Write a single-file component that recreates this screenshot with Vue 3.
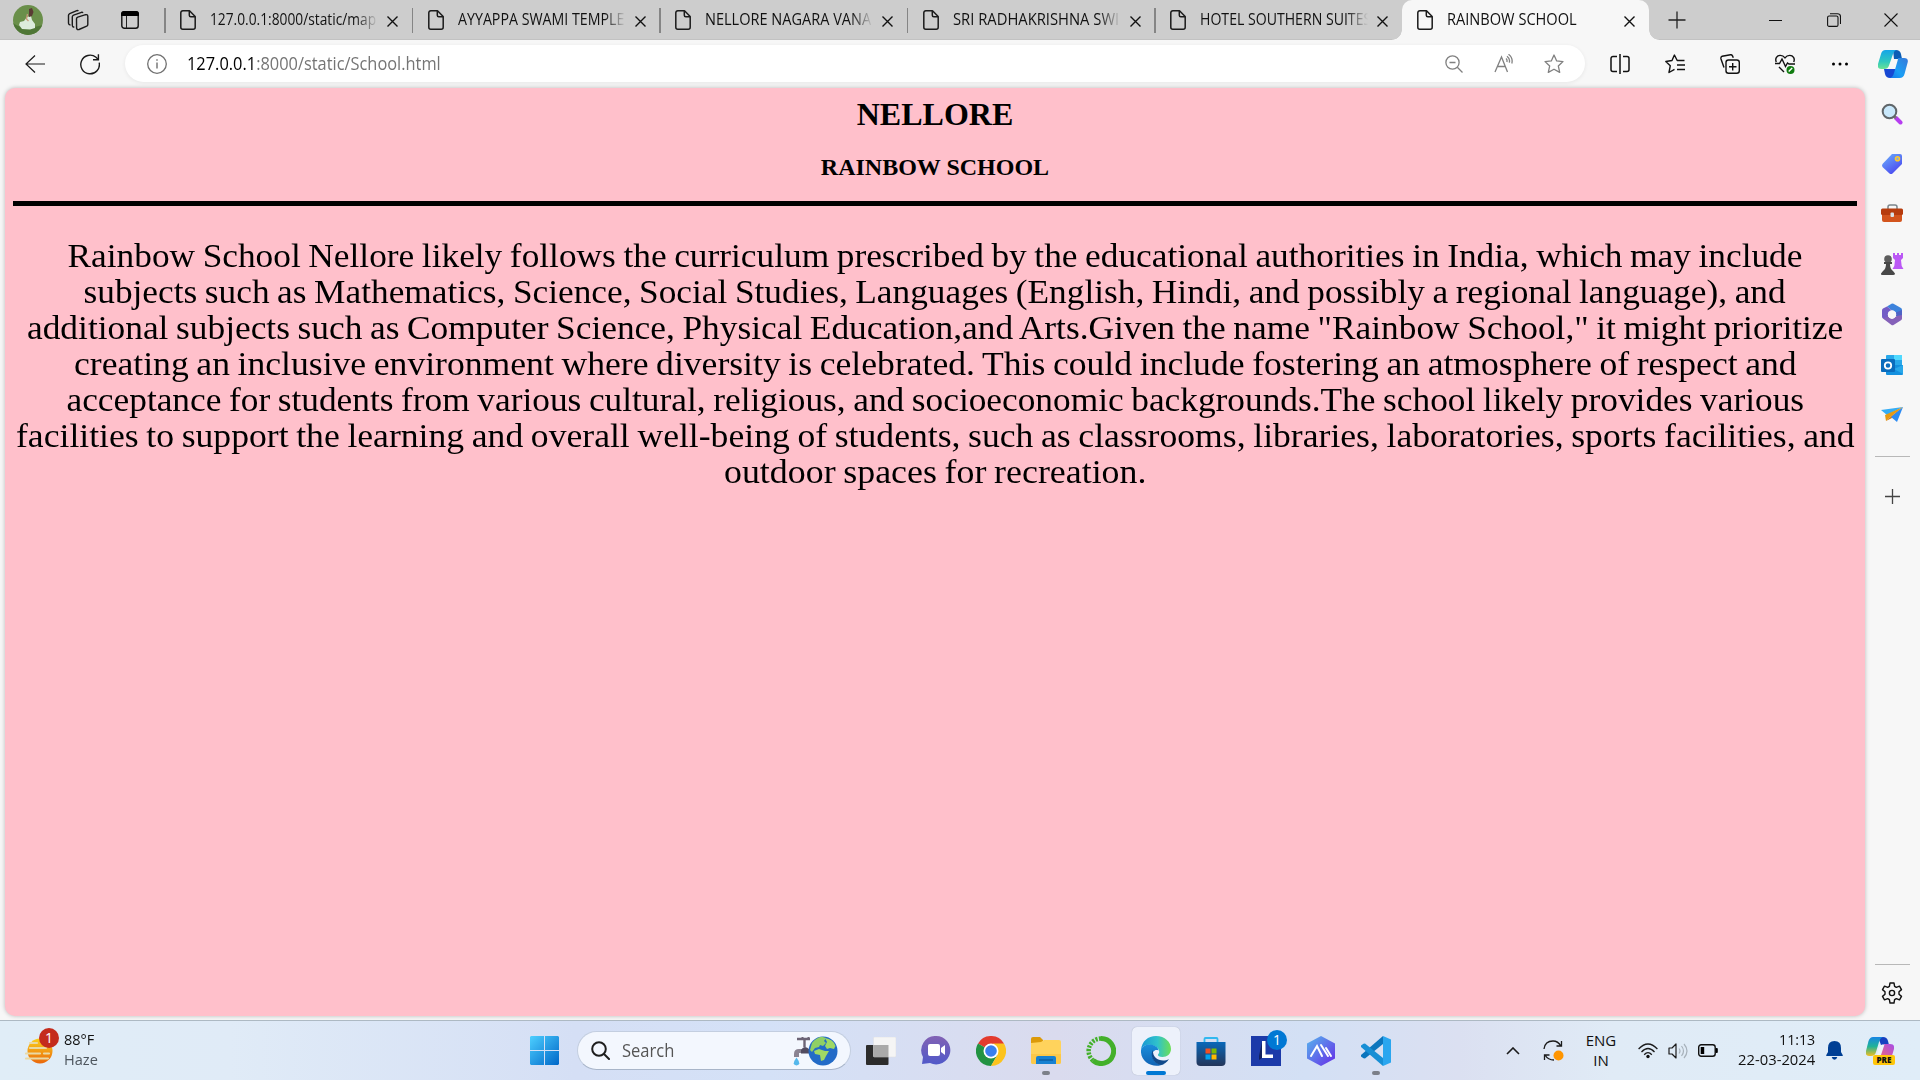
<script setup>
// Stretches a text run horizontally to the given advance width.
const vFit = {
  mounted(el, { value }) {
    el.style.transform = `scaleX(${value / el.offsetWidth})`
  }
}

const tabs = [
  { title: '127.0.0.1:8000/static/map', width: 166 },
  { title: 'AYYAPPA SWAMI TEMPLE', width: 166 },
  { title: 'NELLORE NAGARA VANA', width: 166 },
  { title: 'SRI RADHAKRISHNA SWI', width: 166 },
  { title: 'HOTEL SOUTHERN SUITES', width: 171 },
  { title: 'RAINBOW SCHOOL', width: 130, active: true }
]

const lines = [
  { text: 'Rainbow School Nellore likely follows the curriculum prescribed by the educational authorities in India, which may include', width: 1735 },
  { text: 'subjects such as Mathematics, Science, Social Studies, Languages (English, Hindi, and possibly a regional language), and', width: 1702 },
  { text: 'additional subjects such as Computer Science, Physical Education,and Arts.Given the name "Rainbow School," it might prioritize', width: 1816 },
  { text: 'creating an inclusive environment where diversity is celebrated. This could include fostering an atmosphere of respect and', width: 1723 },
  { text: 'acceptance for students from various cultural, religious, and socioeconomic backgrounds.The school likely provides various', width: 1738 },
  { text: 'facilities to support the learning and overall well-being of students, such as classrooms, libraries, laboratories, sports facilities, and', width: 1839 },
  { text: 'outdoor spaces for recreation.', width: 422 }
]
</script>

<template>
  <div class="screen">
    <header class="tabstrip">
      <div class="slot profile">
        <svg width="30" height="30" viewBox="0 0 30 30">
          <defs><clipPath id="av"><circle cx="15" cy="15" r="15" /></clipPath></defs>
          <g clip-path="url(#av)">
            <rect width="30" height="30" fill="#6a8f4a" />
            <path d="M0 18Q10 26 30 20V30H0z" fill="#4f7636" />
            <path d="M14 12l4-1 1 4 3 4 0 4-5 1.500-8-.5-3-4 1-3 4-1z" fill="#dcecdc" />
            <path d="M16 4l3-1 1.500 4-1.500 4-3 1z" fill="#5a3b34" />
            <path d="M14.500 9l-1 5 2 2" stroke="#c99a7d" stroke-width="1.300" fill="none" />
          </g>
        </svg>
      </div>
      <div class="slot workspaces">
        <svg width="22" height="22" viewBox="0 0 22 22" fill="none" stroke="#1b1b1b" stroke-width="1.400" stroke-linejoin="round">
          <path d="M9.500 9.700q.1-1.200 1.300-1.600l7.800-2.400q2-.4 2.200 1.500v8.300q0 1.200-1.100 1.700l-7.700 3.300q-1.900.6-2.400-1.200z" />
          <path d="M7.300 18q-1.900.2-2-1.700V7.800q.1-1.200 1.300-1.700L14.500 3.300q1-.2 1.400.8" />
          <path d="M3.500 16q-1.900-.1-2-1.800V6.400q.1-1.200 1.200-1.700L9.800 1.600q1-.3 1.500.5" />
        </svg>
      </div>
      <div class="slot tabactions">
        <svg width="18" height="18" viewBox="0 0 18 18"><rect x=".8" y=".8" width="16.400" height="16.400" rx="2.500" fill="none" stroke="#111" stroke-width="1.400" /><path d="M0 3a3 3 0 0 1 3-3h12a3 3 0 0 1 3 3v2H0z" fill="#000" /><path d="M5.500 5v12" stroke="#222" /></svg>
      </div>
      <div v-for="t in tabs" :key="t.title" class="tab" :class="{ active: t.active }">
        <svg class="page" width="16" height="20" viewBox="0 0 16 20" fill="none" stroke="#1b1b1b" stroke-width="1.500" stroke-linejoin="round"><path d="M2.800.8H9.500L15.200 6.500V17.200a2 2 0 0 1-2 2H2.800a2 2 0 0 1-2-2V2.800a2 2 0 0 1 2-2z" /><path d="M9.300 1v4.200q0 1.500 1.500 1.500H15" /></svg>
        <div class="title"><span v-fit="t.width" class="run">{{ t.title }}</span></div>
        <svg class="x" width="11" height="11" viewBox="0 0 11 11" stroke="#111" stroke-width="1.400"><path d="M.5.5l10 10M10.500.5l-10 10" /></svg>
      </div>
      <svg class="newtab" width="18" height="18" viewBox="0 0 18 18" stroke="#222" stroke-width="1.300"><path d="M9 .5v17M.5 9h17" /></svg>
      <div class="window">
        <svg width="14" height="14" viewBox="0 0 14 14" fill="none" stroke="#111"><path d="M0 7.500h13" /></svg>
        <svg width="14" height="14" viewBox="0 0 14 14" fill="none" stroke="#111" stroke-width="1.100"><rect x=".6" y="3" width="10.400" height="10.400" rx="1.500" /><path d="M3 .7h7.500a3 3 0 0 1 3 3V11" /></svg>
        <svg width="14" height="14" viewBox="0 0 14 14" fill="none" stroke="#111" stroke-width="1.100"><path d="M.5.5l13 13M13.500.5l-13 13" /></svg>
      </div>
    </header>

    <div class="body">
      <div class="left">
        <nav class="toolbar">
          <svg class="back" width="20" height="18" viewBox="0 0 20 18" fill="none" stroke="#1b1b1b" stroke-width="1.200"><path d="M20 9H1M10 .5L1 9l9 8.500" /></svg>
          <svg class="reload" width="20" height="21" viewBox="0 0 20 21" fill="none" stroke="#1b1b1b" stroke-width="1.400"><path d="M19.200 8.600A9.300 9.300 0 1 1 16 3.300L18.300 5.500" /><path d="M18.400.3v5.400H13" /></svg>
          <div class="address">
            <svg class="info" width="20" height="20" viewBox="0 0 20 20" fill="none" stroke="#707070" stroke-width="1.300"><circle cx="10" cy="10" r="9.300" /><path d="M10 8.500v6M10 5.300v1.500" stroke-width="1.400" /></svg>
            <div class="url"><span v-fit="254" class="run">127.0.0.1<i>:8000/static/School.html</i></span></div>
            <svg width="20" height="20" viewBox="0 0 20 20" fill="none" stroke="#808080" stroke-width="1.300"><circle cx="8.500" cy="8.500" r="6.600" /><path d="M13.300 13.300l5.200 5.200M5.500 8.500h6" /></svg>
            <svg width="20" height="20" viewBox="0 0 20 20" fill="none" stroke="#808080" stroke-width="1.300"><path d="M1 18L7.500 3 13.500 18M3.200 12.500h8.300M12 4.500q1.600 1.500.8 3.500M13 2.200q3.400 2.500 2.300 6.500M14.500.3q4.800 3.700 3.300 9.200" /></svg>
            <svg width="20" height="20" viewBox="0 0 20 20" fill="none" stroke="#808080" stroke-width="1.300" stroke-linejoin="round"><path d="M10 1l2.700 5.900 6.300.7-4.700 4.300 1.400 6.500L10 15.200l-5.700 3.200 1.400-6.500L1 7.600l6.300-.7z" /></svg>
          </div>
          <div class="tools">
            <svg width="20" height="20" viewBox="0 0 20 20" fill="none" stroke="#111" stroke-width="1.500"><path d="M7 2.500H3a2 2 0 0 0-2 2v11a2 2 0 0 0 2 2h4M13 2.500h4a2 2 0 0 1 2 2v11a2 2 0 0 1-2 2h-4M10 0v20" /></svg>
            <svg width="20" height="20" viewBox="0 0 20 20" fill="none" stroke="#111" stroke-width="1.400" stroke-linejoin="round"><path d="M19.500 6.500h-7.300L9.400 1 7 6.500.8 7.500l4.500 4.200L4 18.500l5.500-3.200M12 11h8M12 15.500h8" /></svg>
            <svg width="20" height="20" viewBox="0 0 20 20" fill="none" stroke="#111" stroke-width="1.400"><rect x="6" y="6" width="13.300" height="13.300" rx="2.500" /><path d="M12.700 9v7.500M9 12.700h7.500M4 13.500L1 5q-.5-2 1.200-2.800L10.500.7q1.500-.2 2 1.200l.8 1.800" /></svg>
            <svg width="20" height="20" viewBox="0 0 20 20" fill="none" stroke="#111" stroke-width="1.400"><path d="M1.300 8C-.3 4.500 2 1.400 5.200 1.400q3 0 4.800 2.500 1.800-2.500 4.800-2.500c3.200 0 5.500 3.100 3.900 6.600M0 9.500h4.500l2.500-4.500 3.500 7.500 2-3.500 1.500 1h6M4 13l5 5" /><circle cx="15.500" cy="16" r="4" fill="#107c10" stroke="none" /><path d="M13.700 17.500l3.500-3.500" stroke="#fff" /></svg>
            <svg width="20" height="20" viewBox="0 0 20 20"><circle cx="3.500" cy="10" r="1.500" /><circle cx="10" cy="10" r="1.500" /><circle cx="16.500" cy="10" r="1.500" /></svg>
          </div>
        </nav>
        <main class="page-view">
          <h1>NELLORE</h1>
          <h2>RAINBOW SCHOOL</h2>
          <hr />
          <p><span v-for="l in lines" :key="l.text" class="line"><span v-fit="l.width" class="run">{{ l.text }}</span></span></p>
        </main>
      </div>

      <aside class="sidebar">
        <svg class="copilot" width="30" height="28" viewBox="0 0 30 28">
          <defs>
            <linearGradient id="c1" x1="0" y1="0" x2="0" y2="1"><stop offset="0" stop-color="#15a5e8" /><stop offset=".6" stop-color="#2ec7c0" /><stop offset="1" stop-color="#67e394" /></linearGradient>
            <linearGradient id="c2" x1="0" y1="1" x2="1" y2="0"><stop offset="0" stop-color="#1575e8" /><stop offset=".4" stop-color="#1b9ff5" /><stop offset="1" stop-color="#3778d8" /></linearGradient>
          </defs>
          <path d="M15 0h3q4 0 5 4l1 5h-8z" fill="#0b5db5" />
          <path d="M6 19l1 5q1 4 5 4h5l3-9z" fill="#1748d3" />
          <path d="M7.500 0H18q-2 1-3 4l-4 11.500q-1 3.500-5 3.500H3q-4 0-3-5L3 4q1-4 4.500-4z" fill="url(#c1)" />
          <path d="M20 8h6q5 0 3.500 5L26.500 24q-1 4-5 4H12q3-1 4-5l3.500-12q.5-2 .5-3z" fill="url(#c2)" />
          <path d="M16.500 9h3l-3 8q-1 2-4 2h-2l1-3 2-5q1-2 3-2z" fill="#f7f7f7" />
        </svg>
        <div class="apps">
          <div class="side-slot"><svg width="22" height="22" viewBox="0 0 22 22"><path d="M15 15l4.500 4.500" stroke="#b63df0" stroke-width="4" stroke-linecap="round" /><path d="M12 12l3 3" stroke="#777" stroke-width="2.500" /><circle cx="8.500" cy="8.500" r="6.800" fill="#c9e8fb" stroke="#60666a" stroke-width="2" /></svg></div>
          <div class="side-slot"><svg width="22" height="22" viewBox="0 0 22 22"><defs><linearGradient id="tg" x1="0" y1="0" x2=".7" y2="1"><stop stop-color="#6cb4fb" /><stop offset="1" stop-color="#4a46f0" /></linearGradient></defs><path d="M11 1h8q2 0 2 2v8l-9.500 9.500q-1.500 1-3 0L1.500 14q-1-1.500 0-3z" fill="url(#tg)" /><circle cx="16.500" cy="5.700" r="2" fill="#80a5e9" stroke="#ffc928" stroke-width="1.600" /></svg></div>
          <div class="side-slot"><svg width="22" height="22" viewBox="0 0 22 22"><path d="M7 6V4q0-2 2-2h5q2 0 2 2v2" fill="none" stroke="#7b858b" stroke-width="1.500" /><path d="M1 11h20v6q0 2-2 2H3q-2 0-2-2z" fill="#d3541d" /><rect y="5.500" width="22" height="6.500" rx="1.500" fill="#b63c0e" /><rect x="9.500" y="9.500" width="3.500" height="4.500" rx="1" fill="#d9e3e8" /></svg></div>
          <div class="side-slot"><svg width="24" height="24" viewBox="0 0 24 24"><path d="M13 1h2v2h2V1h2v2h2V1h2v5l-2 2 .7 6 1.800 3H12.500l1.800-3 .7-6-2-2z" fill="#bb58f5" /><circle cx="8" cy="7" r="3.800" fill="#5c5c5c" /><path d="M4 10h8v2h-2q0 5 3 7l2 2.500q0 1.500-2 1.500H2.500q-2 0-1.500-1.500L3 19q3-2 3-7H4z" fill="#484848" /></svg></div>
          <div class="side-slot"><svg width="22" height="23" viewBox="0 0 22 23"><path d="M6 3.500L10.500.8q1-.5 2 0L20 5q1 .7 1 2v8l-6-2V9.500L11 7.500z" fill="#3d83dc" /><path d="M6 3.500L11 7.500 7 10v4l3 5-8-3.500q-1-.7-1-2V7.500q0-1.300 1-2z" fill="#735cc6" /><path d="M2 15.500l5-2 4 2.500 4-2.500 6-5V15.500q0 1.200-1 1.800l-7.500 4.700q-1 .6-2 0z" fill="#8561b9" /><path d="M15 13V9.500L21 7v5z" fill="#4e63c5" /><circle cx="11" cy="11.500" r="4.200" fill="#f7f7f7" /></svg></div>
          <div class="side-slot"><svg width="22" height="22" viewBox="0 0 22 22"><path d="M6 1h14q1 0 1 1v9H5V2q0-1 1-1z" fill="#28a8ea" /><path d="M13 1h8v5h-8z" fill="#50d9ff" /><path d="M5 11h17v9q0 1-1 1H6q-1 0-1-1z" fill="#1490df" /><path d="M22 11v9L13 15z" fill="#28a8ea" /><rect y="5" width="14" height="13" rx="1" fill="#0a6cbd" /><circle cx="7" cy="11.500" r="3.200" fill="none" stroke="#fff" stroke-width="1.800" /></svg></div>
          <div class="side-slot"><svg width="22" height="22" viewBox="0 0 22 22"><path d="M0 6l22-3L6 11z" fill="#35adf5" /><path d="M22 3L4 11l1 6 3-3z" fill="#e89b10" /><path d="M22 3L8 14l-3 3 6-3z" fill="#d67c16" /><path d="M22 3L10 13l6 5z" fill="#2c8bf3" /></svg></div>
        </div>
        <div class="rule"></div>
        <svg class="plus" width="15" height="15" viewBox="0 0 15 15" stroke="#444" stroke-width="1.300"><path d="M7.500 0v15M0 7.500h15" /></svg>
        <div class="rule bottom"></div>
        <svg class="gear" width="22" height="22" viewBox="0 0 22 22" fill="none" stroke="#111" stroke-width="1.400" stroke-linejoin="round"><path d="M9 1h4l.6 3.300 1.700 1 3.200-1.200 2 3.500L18 9.800v2.400l2.500 2.200-2 3.500-3.200-1.200-1.700 1L13 21H9l-.6-3.300-1.700-1-3.200 1.200-2-3.500L4 12.200V9.800L1.500 7.600l2-3.500 3.200 1.200 1.700-1z" /><circle cx="11" cy="11" r="2.600" /></svg>
      </aside>
    </div>

    <footer class="taskbar">
      <div class="weather">
        <div class="sun">
          <svg width="28" height="26" viewBox="0 0 28 26"><defs><linearGradient id="sn" x1="0" y1="0" x2="0" y2="1"><stop stop-color="#fbd01c" /><stop offset="1" stop-color="#ea670c" /></linearGradient></defs><circle cx="15" cy="13" r="12.500" fill="url(#sn)" /><path d="M5 5h7M5 10h16M1 15.500h14M19 15.500h5M1 20.500h22" stroke="#e9d9a4" stroke-width="2.200" stroke-linecap="round" /></svg>
          <b class="badge">1</b>
        </div>
        <div class="stack"><span v-fit="30" class="run">88°F</span><span v-fit="34" class="run dim">Haze</span></div>
      </div>

      <div class="apps-row">
        <svg class="start" width="29" height="29" viewBox="0 0 29 29"><defs><linearGradient id="w" x1="0" y1="0" x2="1" y2="1"><stop stop-color="#4dcfff" /><stop offset="1" stop-color="#0067c8" /></linearGradient></defs><path d="M1 0h13v14H0V1zM15 0h13l1 1v13H15zM0 15h14v14H1l-1-1zM15 15h14v13l-1 1H15z" fill="url(#w)" /></svg>
        <div class="search">
          <svg width="19" height="19" viewBox="0 0 19 19" fill="none" stroke="#1e1e1e" stroke-width="2"><circle cx="8" cy="8" r="6.800" /><path d="M13 13l5 5" stroke-linecap="round" /></svg>
          <span v-fit="52" class="run">Search</span>
          <svg class="earth" width="46" height="30" viewBox="0 0 46 30"><path d="M2 21v-3q0-5 5-5h13v4H7v4z" fill="#8a8392" /><path d="M9 14q2-3 4-3t5 3v3.500H9z" fill="#514b60" /><path d="M10.500 1v3M16.500 1v3" stroke="#6c6476" stroke-width="2" /><path d="M5 3h13M12.500 3v8" stroke="#6c6476" stroke-width="2.400" /><path d="M4.500 21.500q5.500 7.500 0 8-5.500-.5 0-8z" fill="#55b8ec" /><circle cx="31" cy="15" r="14.500" fill="#236bc7" /><path d="M20 7q5-6 10-6.200l4 1.200-2 3 2 2-3 3-3-1-1 2-4 1-3 4-2-2z" fill="#8fcf65" /><path d="M33 2q8 1 10.500 8l-1.500 3-4-1-3 1-2-3 2-4zM22 15l5-2 6 2 4 0-3 5-2 4-3 1-1-6-5-1z" fill="#a0d964" /></svg>
        </div>
        <div class="app"><svg width="30" height="28" viewBox="0 0 30 28"><rect y="8" width="22.500" height="20" rx="1" fill="#2c2c2c" /><rect x="7.500" width="22.500" height="20" rx="1" fill="#f5f5f5" stroke="#dedede" stroke-width=".5" /><path d="M7.500 8h15v12h-15z" fill="#aaa" /></svg></div>
        <div class="app"><svg width="30" height="29" viewBox="0 0 30 29"><defs><linearGradient id="tm" x1="0" y1="0" x2="0" y2="1"><stop stop-color="#8262b4" /><stop offset="1" stop-color="#5059c9" /></linearGradient></defs><path d="M15 0a14.200 14.200 0 1 1-6 27L1 28l1-7A14.200 14.200 0 0 1 15 0z" fill="url(#tm)" /><rect x="7" y="8" width="12" height="12" rx="2" fill="#fff" /><path d="M20 12l4-3v10l-4-3z" fill="#fff" /></svg></div>
        <div class="app"><svg width="30" height="30" viewBox="0 0 30 30"><path d="M15 15L2 7.500A15 15 0 0 1 28 7.500z" fill="#e33b2e" /><path d="M2 7.500A15 15 0 0 0 15 30l6.500-11.300L15 15z" fill="#229342" /><path d="M28 7.500A15 15 0 0 1 15 30l6.500-11.300L17 7.500z" fill="#fcc31d" /><circle cx="15" cy="15" r="7.500" fill="#fff" /><circle cx="15" cy="15" r="5.800" fill="#397fed" /></svg></div>
        <div class="app run-dot"><svg width="30" height="27" viewBox="0 0 30 27"><path d="M0 2q0-2 2-2h7l3 3v4H0z" fill="#dc9a09" /><path d="M0 6l10-1 3-2h15q2 0 2 2v20q0 2-2 2H2q-2 0-2-2z" fill="#ffd35c" /><path d="M0 17h30v8q0 2-2 2H2q-2 0-2-2z" fill="#fcc849" /><path d="M5 21q0-2 2-2h16q2 0 2 2v6H5z" fill="#1781d1" /><path d="M8 23h14" stroke="#0b5a9b" stroke-width="1.300" /></svg></div>
        <div class="app"><svg width="30" height="30" viewBox="0 0 30 30" fill="none" stroke="#43b02a"><path d="M15 2.500a12.500 12.500 0 1 1-8 22" stroke-width="5" /><path d="M7 24.500A12.500 12.500 0 0 1 15 2.500" stroke-width="4.500" stroke-dasharray="2.200 1.300" /></svg></div>
        <div class="app current"><svg width="30" height="30" viewBox="0 0 30 30"><defs><linearGradient id="e1"><stop stop-color="#1897d4" /><stop offset=".55" stop-color="#30c2cb" /><stop offset="1" stop-color="#6ddf55" /></linearGradient><linearGradient id="e2" x1="0" y1="0" x2="0" y2="1"><stop stop-color="#1b8fdb" /><stop offset="1" stop-color="#1063b5" /></linearGradient></defs><path d="M0 14C1 5 7 0 15 0c9 0 15 6 15 13 0 5-4 8-8.500 8-3 0-5-1-4.500-2.500 2-1.500 1.500-5-1-7C10 7 2 8 0 14z" fill="url(#e1)" /><path d="M0 14C2 8 10 7 15 10.500c2 1.500 2.500 3 2.500 4-5-2-8 4-5 9 2 3.500 6 5.500 11 4.500C13 33-1 27 0 14z" fill="url(#e2)" /><path d="M12 14c-3 4-1 13 8 15 3-.5 6-3 8-6-7 4-17 0-16-9z" fill="#114a8b" /></svg></div>
        <div class="app"><svg width="30" height="30" viewBox="0 0 30 30"><defs><linearGradient id="st" x1="0" y1="0" x2="0" y2="1"><stop stop-color="#0968b9" /><stop offset="1" stop-color="#243559" /></linearGradient></defs><path d="M8.500 8V3q0-1 1-1h11q1 0 1 1v5" fill="none" stroke="#31b8ef" stroke-width="1.800" /><path d="M.5 6h29v20q0 4-4 4h-21q-4 0-4-4z" fill="url(#st)" /><path d="M9.500 12.500h5v5h-5z" fill="#f25022" /><path d="M15.500 12.500h5v5h-5z" fill="#7fba00" /><path d="M9.500 18.500h5v5h-5z" fill="#00a4ef" /><path d="M15.500 18.500h5v5h-5z" fill="#ffb900" /></svg></div>
        <div class="app"><svg width="30" height="30" viewBox="0 0 30 30"><path d="M0 0h30v30H0z" fill="#1c3aa9" /><path d="M11 6L8 20v4l3-2z" fill="#111f5e" /><path d="M11 5h3.500v13.500H22V22H11z" fill="#fff" /></svg><b class="badge blue">1</b></div>
        <div class="app"><svg width="28" height="30" viewBox="0 0 28 30"><defs><linearGradient id="ax" x1="0" y1="0" x2="1" y2="1"><stop stop-color="#56b6ed" /><stop offset="1" stop-color="#672be8" /></linearGradient></defs><path d="M14 0l14 7.500v15L14 30 0 22.500v-15z" fill="url(#ax)" /><path d="M4 20l6-10 5 10M14 9l7 11M19 12l5 8" stroke="#fff" stroke-width="2" fill="none" stroke-linecap="round" /></svg></div>
        <div class="app run-dot"><svg width="30" height="30" viewBox="0 0 30 30"><path d="M22 8L4 22.500l-1.500-.2L0 20.500v-1.500L22 0z" fill="#0b75bd" /><path d="M22 22L4 7.500l-1.500.2L0 9.500V11l22 19z" fill="#178fd5" /><path d="M22 0l8 3.500v23L22 30z" fill="#2aa6ef" /></svg></div>
      </div>

      <div class="tray">
        <svg class="chev" width="14" height="8" viewBox="0 0 14 8" fill="none" stroke="#1b1b1b" stroke-width="1.600"><path d="M1 7l6-6 6 6" /></svg>
        <svg class="sync" width="21" height="21" viewBox="0 0 21 21" fill="none" stroke="#1b1b1b" stroke-width="1.300"><path d="M1 9Q2 1 10 1q5 0 8 5M18.500 1v5h-5M1.500 20v-5h5M2 15q3 5 9 5" /><circle cx="15.500" cy="15.500" r="5" fill="#ff9500" stroke="none" /></svg>
        <div class="stack lang"><span>ENG</span><span>IN</span></div>
        <svg class="wifi" width="20" height="16" viewBox="0 0 20 16" fill="none" stroke="#1b1b1b" stroke-width="1.300"><path d="M.6 6Q10-4 19.400 6M3.500 9Q10 2 16.500 9M6.200 11.700Q10 7.500 13.800 11.700" /><circle cx="10" cy="13.500" r="1.700" fill="#111" stroke="none" /></svg>
        <svg class="vol" width="20" height="16" viewBox="0 0 20 16" fill="none" stroke="#1b1b1b" stroke-width="1.200"><path d="M1 5h3l4-4v14l-4-4H1z" stroke-linejoin="round" /><path d="M11 5.500q2 2.500 0 5M13.500 3q4 5 0 10M16 1q6 7 0 14" stroke="#a7b1ba" /></svg>
        <svg class="bat" width="20" height="13" viewBox="0 0 20 13"><rect x=".7" y=".7" width="16.500" height="11.600" rx="2.500" fill="none" stroke="#111" stroke-width="1.400" /><rect x="2.700" y="3" width="3.500" height="7" /><rect x="17.500" y="4" width="2.300" height="5" rx="1" /></svg>
        <div class="stack clock"><span v-fit="36" class="run">11:13</span><span v-fit="77" class="run">22-03-2024</span></div>
        <svg class="bell" width="17" height="19" viewBox="0 0 17 19" fill="#003f94"><path d="M8.500 0q6.500 0 6.500 7v4l1.700 3q.4 1-.7 1H1q-1.100 0-.7-1L2 11V7q0-7 6.500-7zM5.700 16h5.600q-.8 2.800-2.800 2.800T5.700 16z" /></svg>
        <div class="pre">
          <svg width="28" height="24" viewBox="0 0 28 24"><defs><linearGradient id="p1" x1="0" y1="0" x2="0" y2="1"><stop stop-color="#1785e4" /><stop offset=".5" stop-color="#20b397" /><stop offset="1" stop-color="#f0be22" /></linearGradient><linearGradient id="p2" x1="1" y1="0" x2="0" y2="1"><stop stop-color="#a64ce8" /><stop offset="1" stop-color="#f36a75" /></linearGradient></defs><path d="M12 0h5q4 0 5 4l1 4h-8z" fill="#1640c0" /><path d="M7 0h10q-3 1-4 5l-3 10q-1 4-5 4H3q-4 0-3-5L2.500 4Q4 0 7 0z" fill="url(#p1)" /><path d="M18 7h6q5 0 4 5l-3 10H12z" fill="url(#p2)" /><path d="M16 7.500h2.500L15 18h-4l2-7q1-3 3-3.500z" fill="#eef3f8" /></svg>
          <b>PRE</b>
        </div>
      </div>
    </footer>
  </div>
</template>

<style>
html, body { margin: 0; overflow: hidden; }
</style>

<style scoped>
.screen { width: 1920px; height: 1080px; display: flex; flex-direction: column; background: #f7f7f7; font-family: "Open Sans", "Noto Sans", sans-serif; color: #111; overflow: hidden; }
svg { display: block; flex: none; }
.run { display: inline-block; white-space: nowrap; transform-origin: left center; }
.tabstrip { height: 40px; flex: none; display: flex; align-items: center; background: #cdcdcd; box-shadow: inset 0 -1px #c2c2c2; }
.slot { display: flex; justify-content: center; align-items: center; }
.profile { width: 56px; }
.workspaces { width: 43px; }
.tabactions { width: 62px; margin-right: 3px; }
.tab { position: relative; box-sizing: border-box; flex: none; width: 247.500px; height: 40px; display: flex; align-items: center; padding-left: 16px; }
.tab:not(.active)::before { content: ""; position: absolute; left: 0; top: 8px; width: 1.500px; height: 25px; background: #858585; }
.tab .title { width: 168px; margin-left: 14px; height: 24px; margin-top: -3px; line-height: 24px; font-size: 15.500px; overflow: hidden; -webkit-mask-image: linear-gradient(to right, #000 146px, transparent 168px); }
.tab .x { margin-left: 9px; margin-top: 2px; }
.tab.active { background: #f7f7f7; border-radius: 10px 10px 0 0; padding-left: 15px; }
.tab.active::before, .tab.active::after { content: ""; position: absolute; bottom: 0; width: 10px; height: 10px; }
.tab.active::before { left: -10px; background: radial-gradient(circle at 0 0, #cdcdcd 9.500px, #f7f7f7 10px); }
.tab.active::after { right: -10px; background: radial-gradient(circle at 100% 0, #cdcdcd 9.500px, #f7f7f7 10px); }
.newtab { margin-left: 18.500px; }
.window { margin-left: auto; margin-right: 22px; display: flex; gap: 43.500px; }
.body { flex: 1; display: flex; min-height: 0; }
.left { width: 1865px; display: flex; flex-direction: column; }
.toolbar { height: 48px; flex: none; display: flex; align-items: center; }
.back { margin-left: 25px; }
.reload { margin-left: 35px; }
.address { box-sizing: border-box; width: 1460px; height: 37px; margin-left: 25px; margin-bottom: 1px; border-radius: 19px; background: #fff; box-shadow: 0 1px 4px #00000012; display: flex; align-items: center; padding: 1px 21px 0 22px; gap: 30px; }
.url { width: 980px; margin-left: -10px; margin-right: auto; margin-top: -3px; font-size: 18px; line-height: 28px; color: #000; }
.url i { font-style: normal; color: #757575; }
.tools { display: flex; gap: 35.200px; margin-left: 24.500px; }
.page-view { flex: 1; margin: 0 0 4px 5px; border-radius: 10px; background: #ffc0cb; box-shadow: 0 0 4px #00000040; padding: 0 8px; text-align: center; color: #000; font-family: "Liberation Serif", serif; }
h1 { margin: 8px 0 0; font-size: 32px; line-height: 37px; }
h2 { margin: 20px 0 0; font-size: 24px; line-height: 28px; }
hr { margin: 20px 0 0; border: 0; height: 5px; background: #000; }
p { margin: 32px 0 0; font-size: 34px; word-spacing: -1.200px; }
.line { display: flex; justify-content: center; height: 36px; line-height: 36px; }
.line .run { transform-origin: center; flex: none; }
.sidebar { width: 55px; display: flex; flex-direction: column; align-items: center; }
.copilot { margin-top: 10px; }
.apps { height: 325px; margin: 24px 2px 0 0; display: flex; flex-direction: column; align-items: center; justify-content: space-between; }
.side-slot { width: 24px; height: 24px; display: flex; align-items: center; justify-content: center; }
.rule { width: 35px; height: 1px; background: #b8b8b8; margin-top: 29px; }
.plus { margin-top: 32px; }
.rule.bottom { margin-top: auto; }
.gear { margin: 17px 1px 16px 0; }
.taskbar { height: 60px; flex: none; box-sizing: border-box; border-top: 1px solid #adb9c3; display: flex; align-items: center; background: linear-gradient(90deg, #e0edf7 0, #e0ebf7 12%, #d5dff5 30%, #d4e1f7 40%, #dadbee 55%, #d3e0f5 68%, #dbe0f1 76%, #e0ebf6 84%, #e0edf8 100%); }
.stack { display: flex; flex-direction: column; font-size: 15px; line-height: 20px; }
.weather { width: 530px; display: flex; align-items: center; }
.sun { position: relative; margin-left: 25px; margin-right: 11px; }
.dim { color: #4e565e; }
.badge { position: absolute; left: 14px; top: -10px; width: 20px; height: 20px; border-radius: 50%; background: #c42b1c; color: #fff; font-size: 14px; line-height: 20px; font-weight: 400; text-align: center; }
.weather .stack { margin-top: -3px; align-items: flex-start; }
.apps-row { flex: none; width: 932px; display: flex; align-items: center; }
.search { box-sizing: border-box; flex: none; width: 274px; height: 39px; margin: 0 6px 0 18px; border: 1px solid #c3cee0; border-bottom-color: #a8b5c9; border-radius: 20px; background: #f3f7fe; display: flex; align-items: center; padding: 0 12px 0 13px; font-size: 17.500px; color: #555; }
.search .run { margin-left: 12px; margin-top: -1px; }
.search .earth { margin-left: auto; }
.app { position: relative; flex: none; width: 48px; height: 48px; margin-right: 7px; border-radius: 5px; display: flex; align-items: center; justify-content: center; }
.current { background: #edf1fb; box-shadow: 0 0 1px #98a0b0; }
.run-dot::after, .current::after { content: ""; position: absolute; bottom: 0; width: 8px; height: 4px; border-radius: 2px; background: #7c8089; }
.current::after { width: 20px; background: #0078d4; }
.badge.blue { left: 25px; top: 3px; background: #0078d4; }
.tray { flex: 1; display: flex; align-items: center; }
.chev { margin-left: 44px; }
.sync { margin-left: 23px; }
.lang { width: 40px; margin-left: 17px; text-align: center; margin-top: -2px; }
.wifi { margin-left: 17px; }
.vol { margin-left: 10px; }
.bat { margin-left: 10px; }
.clock { width: 78px; margin-left: 19px; text-align: right; margin-top: -3px; align-items: flex-end; }
.clock .run { transform-origin: right center; }
.bell { margin-left: 11px; }
.pre { position: relative; margin-left: 23px; margin-top: -4px; }
.pre b { position: absolute; left: 7px; top: 18px; width: 22px; height: 10px; border-radius: 2px; background: #ffc60a; font-size: 8px; line-height: 10px; text-align: center; font-weight: 800; }
</style>
